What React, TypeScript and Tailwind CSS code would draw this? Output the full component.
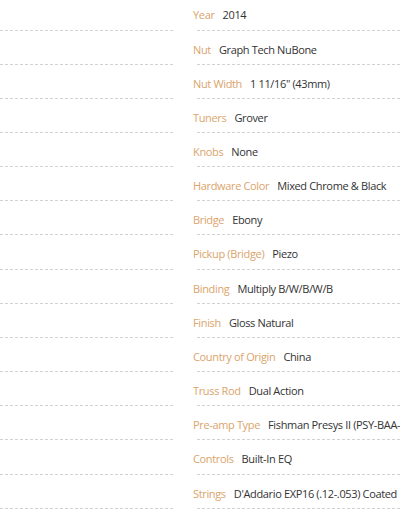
import React from 'react'

const specs: [string, string][] = [
  ['Year', '2014'],
  ['Nut', 'Graph Tech NuBone'],
  ['Nut Width', '1 11/16" (43mm)'],
  ['Tuners', 'Grover'],
  ['Knobs', 'None'],
  ['Hardware Color', 'Mixed Chrome & Black'],
  ['Bridge', 'Ebony'],
  ['Pickup (Bridge)', 'Piezo'],
  ['Binding', 'Multiply B/W/B/W/B'],
  ['Finish', 'Gloss Natural'],
  ['Country of Origin', 'China'],
  ['Truss Rod', 'Dual Action'],
  ['Pre-amp Type', 'Fishman Presys II (PSY-BAA-A)'],
  ['Controls', 'Built-In EQ'],
  ['Strings', "D'Addario EXP16 (.12-.053) Coated"],
]

export default function App() {
  return (
    <div className="w-[400px] h-[516px] overflow-hidden bg-white" style={{ fontFamily: '"Open Sans", "Noto Sans", sans-serif' }}>
      <div className="flex mt-[-3.67px]">
        {/* left column: rows with empty content */}
        <ul className="w-[173px] shrink-0">
          {specs.map((_, i) => (
            <li key={i} className="h-[34.17px] border-b border-dashed border-[#d2d2d2]" />
          ))}
        </ul>

        <ul className="flex-1 min-w-0 pl-[24px]">
          {specs.map(([label, value], i) => (
            <li key={i} className="h-[34.17px] flex flex-col">
              <div className="pt-[10px] leading-[17px] text-[11px] tracking-[-0.35px] whitespace-nowrap -ml-[4px]">
                <span className="text-[#dba46c]">{label}</span>
                <span className="text-[#333333] ml-[8px]">{value}</span>
              </div>
              <div className="mt-auto border-b border-dashed border-[#d2d2d2] mr-[-40px]" />
            </li>
          ))}
        </ul>
      </div>
    </div>
  )
}
